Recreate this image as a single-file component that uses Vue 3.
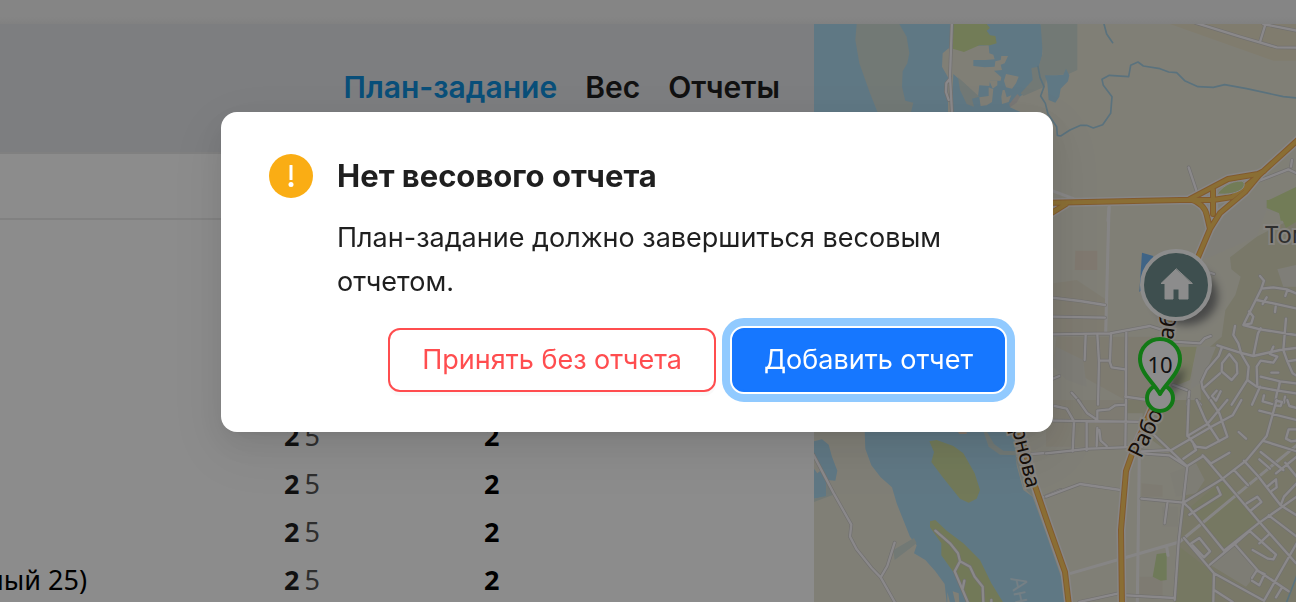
<script setup>
const rows = [
  { id: 1 },
  { id: 2 },
  { id: 3 },
  { id: 4 },
  { id: 5, count: 2, capacity: 5, total: 2 },
  { id: 6, count: 2, capacity: 5, total: 2 },
  { id: 7, count: 2, capacity: 5, total: 2 },
  { id: 8, name: 'ный 25)', count: 2, capacity: 5, total: 2 },
]

const tabs = [
  { label: 'План-задание', active: true },
  { label: 'Вес', active: false },
  { label: 'Отчеты', active: false },
]

// Map tiles are drawn at three units per pixel.
const tiles = [
  {
    id: 'north',
    at: 'translate(810 0) scale(.33333)',
    roads:
      'M426 60L420 230L426 340 M420 236L409 250L408 276L416 300 M1155 68L1290 110L1400 142L1460 143 M1360 72L1460 92 M1366 74L1350 126 M1136 502L1160 574 M1340 545L1435 508L1460 520 M1446 480L1443 500',
    faint: 'M726 572L790 596 M898 616L894 662 M1220 606L1220 640',
  },
  {
    id: 'east',
    at: 'translate(1040 200) scale(.33333)',
    roads:
      'M36 293L120 303L195 315 M36 350L195 353 M36 403L210 400L330 378L362 388 M137 404L134 480 M172 404L177 485L174 614 M177 482L208 482L215 502L256 508 M213 402L210 482 M259 396L257 614 M36 537L58 528 M95 578L120 606 M256 590L325 600 M402 425L480 430L494 415L512 408 M500 215L522 222 M400 555L440 570 M448 574L443 614 M660 228L672 242L664 266L610 375L660 388L768 405 M664 266L700 262L740 268L768 280 M650 300L700 310L768 325 M627 334L640 350L634 370L616 374 M668 312L680 292 M707 320L705 336 M742 270L736 288 M585 378L580 405L595 430L604 462 M532 436L600 458L640 468L720 450L768 444 M640 468L654 400L662 385 M545 444L536 468L500 510L484 545L488 566L520 614 M568 462L546 490L545 514L575 540L592 520L590 490L570 464 M604 462L626 500L622 540L575 614 M530 572L516 588L528 602L542 574 M488 566L540 520 M768 480L742 484L730 450 M742 484L758 520L768 526 M652 560L650 500L662 482L700 488L712 470 M662 530L720 544L768 550 M720 544L714 572L768 580 M694 518L715 518 M712 572L704 614 M622 540L650 560L712 572 M660 560L636 614 M672 586L668 604L696 612 M735 590L732 608 M470 600L482 614 M712 470L690 462 M690 462L700 440 M738 356L730 450',
    faint: 'M207 24L197 400',
  },
  {
    id: 'south-west',
    at: 'translate(810 400) scale(.33333)',
    roads:
      'M10 164L70 278L124 374L120 410L140 448L185 504L212 532L255 608 M212 532L232 498L254 428 M376 392L420 430L444 460L450 484L480 500L494 530L518 560L520 608 M450 484L434 514L474 608 M463 542L458 566 M544 600L544 608 M664 162L752 156 M700 292L752 270',
    faint: '',
  },
  {
    id: 'south-east',
    at: 'translate(1046 400) scale(.33333)',
    roads:
      'M20 62L320 66 M26 18L62 26L84 64L80 154 M122 66L122 150 M154 84L152 138 M160 90L164 122L182 138 M0 160L130 146L290 140 M96 0L124 40L154 60 M154 60L154 32L190 28L208 16L238 14 M240 0L238 140 M0 290L102 252L224 270 M100 606L218 580 M242 586L386 594 M286 154L376 150L500 78L560 46L586 0 M286 160L370 166L420 198 M296 78L424 200 M428 0L424 106L450 140L480 144L544 110L520 40L494 0 M452 0L478 60L520 124 M544 0L484 72L424 108 M412 176L450 150L440 126 M424 198L472 168L530 236L640 366L750 490 M424 198L398 424L386 600 M286 296L412 308 M364 310L356 370 M412 308L530 236L600 182L662 108L692 0 M412 308L430 324L534 452 M430 344L524 284L514 262 M534 452L640 368L752 290 M414 414L504 520L502 604 M436 430L460 414L492 454L474 472L440 436 M492 494L566 432L612 392 M504 520L654 602L752 430 M504 570L560 606 M566 432L636 512L728 574 M610 392L690 464L682 478L666 476L620 450 M640 430L668 404 M618 534L632 512L656 522L640 556L618 542 M668 346L752 410 M602 310L634 290L646 306L614 332 M564 210L606 256 M594 182L636 228L704 316L752 346 M640 178L672 206 M644 156L712 210 M650 122L752 154 M752 170L690 220 M666 258L690 238L692 262L678 272 M704 316L714 290L752 250 M718 188L752 230 M496 190L550 158 M470 166L492 188 M578 96L600 116 M640 32L752 60 M752 88L728 88L720 116L736 124L752 122 M690 2L708 6L704 18L688 16 M724 0L730 18L752 24 M690 592L708 562',
    faint: 'M280 160L274 608 M74 520L400 426L752 136 M362 440L366 466',
  },
]

const highways =
  'M1040 203L1180 200L1213 200L1232 197L1257 177L1300 138 M1190 199L1228 179L1258 174L1264 171 M1190 199Q1205 204 1207 216L1210 229L1196 262L1170 315L1160 390L1132 454L1126 471L1121 530L1122 606 M1210 229L1220 213L1245 192L1260 174 M1213 214V190 M1050 214L1066 204 M1017 422L1034 483L1048 524L1065 572L1069 606'
</script>

<template>
  <div class="page">
    <header class="topbar"></header>
    <main class="workspace">
      <section class="plan">
        <nav class="tabs">
          <a
            v-for="tab in tabs"
            :key="tab.label"
            href="#"
            class="tab"
            :class="{ active: tab.active }"
          >{{ tab.label }}</a>
        </nav>
        <div class="strip"></div>
        <table class="stops">
          <tbody>
            <tr v-for="row in rows" :key="row.id">
              <td class="name"><div class="name-text">{{ row.name }}</div></td>
              <td class="count">
                <div v-if="row.count" class="pair"><b>{{ row.count }}</b><span>{{ row.capacity }}</span></div>
              </td>
              <td class="total"><b>{{ row.total }}</b></td>
            </tr>
          </tbody>
        </table>
      </section>

      <section class="map">
        <svg class="canvas" viewBox="814 24 482 578" preserveAspectRatio="xMinYMin slice">
          <rect x="814" y="24" width="482" height="578" fill="#e9e7d8" />

          <g transform="translate(810 0) scale(.33333)">
            <path fill="#eae2c8" d="M1080 72L1460 72V182H1390Z" />
            <path fill="#aedaf0" d="M12 72H692L700 130L696 170L686 204L700 250L664 262L640 282L620 298L600 322L640 340H12Z" />
            <path fill="#cfdcd6" d="M140 72H268L290 110L298 160L292 190L278 214L276 260L286 302L310 308L302 340H204L180 280L148 190L136 120Z" />
            <path fill="#cfdcd6" d="M692 72H802V210L776 222L710 228L704 260L640 288L632 280L668 240L664 204L686 200L698 160Z" />
            <path fill="#aedaf0" d="M704 226H736L760 224L768 206L778 226L774 244L752 266L748 290L736 308L716 300L712 250Z" />
            <path fill="#e9e7d8" d="M430 140L536 136L538 160L550 164L554 178L526 180L490 180V198L524 202L554 200L556 184L572 180L574 168L594 168L584 190L572 194L576 210L552 212L574 232L572 242L540 242L538 258L508 256L504 290L450 240L430 222L424 340H414V232L396 200L398 160L414 146Z" />
            <path fill="#cfdcd6" d="M444 232L508 290L486 296L492 320L470 312L450 270Z" />
            <path fill="#e9e7d8" d="M588 222L626 230L618 250L606 266L588 262L582 242Z M536 262L550 268L546 306L530 316L512 318L508 292L536 288Z M574 290L578 270L584 270L590 292L604 286L596 306L576 312Z M538 242L562 242L562 256L548 266Z" />
            <path fill="#cfe29f" d="M430 72H530L540 84L530 92L540 106L556 108L560 130L540 136H508L462 156L428 146Z" />
            <path fill="#dcd9d5" d="M600 322L620 308L630 290L622 282L598 312Z" />
            <path class="stream" d="M882 72L890 102L908 128 M684 200L690 232L702 260L692 288L706 310L714 342L740 380L742 406L752 408L780 390L812 376L830 376L850 384L878 374L902 340L906 290L880 256L876 238L898 226L956 230L962 196L984 186L1000 198L1050 206L1076 216L1100 218L1124 242L1164 260L1210 262L1244 254L1310 266L1420 290L1460 294" />
            <path fill="#cfe29f" d="M1368 604L1460 560V662H1412L1406 630L1372 620Z" />
          </g>

          <g transform="translate(1040 200) scale(.33333)">
            <path fill="#dcdbc0" d="M768 50L650 110L570 172L574 208L602 230L586 285L556 330L545 410L510 440L480 540L484 614H768Z" />
            <path fill="#e8e6da" d="M490 180L650 110L680 30L768 50V0H590L500 100Z M712 208L768 195V260H730Z M470 440L528 440L500 510L480 550L450 570Z" />
            <path fill="#cfe29f" d="M680 0H768V66L738 84L718 40L680 24Z" />
            <path fill="#dce0b3" d="M400 440H470L450 540L400 560Z" />
            <path fill="#e9ddcb" d="M106 152H172V210H104Z" />
            <path fill="#e6e0cd" d="M40 250L110 240L200 300V400H40Z M50 410H350V614H280L40 480Z" />
            <path fill="#e5e3d8" d="M48 440L130 480L140 560L80 540L40 500Z" />
            <path fill="#73b6f4" d="M306 158L340 168L330 250L298 276Z" />
          </g>

          <g transform="translate(1046 400) scale(.33333)">
            <path fill="#dcdbbd" d="M220 0H752V608H386L398 424L424 198L290 100V40H220Z" />
            <path fill="#e6e4d6" d="M372 220L450 190L476 240L450 280L390 290Z M492 494L566 432L640 512L600 560Z M348 320H396V380H350Z" />
            <path fill="#e6e1cf" d="M0 0H240V140H0Z M286 250L350 256V290H286Z M280 530H350V590H280Z" />
            <path fill="#d7dab2" d="M430 324L534 236L636 366L534 452Z M400 440L504 520V608H386Z" />
            <path fill="#cbdfa3" d="M332 462L362 458V540L344 542L320 530Z" />
            <path class="stream" d="M722 606L752 528" />
          </g>

          <g transform="translate(810 400) scale(.33333)">
            <path fill="#aedaf0" d="M164 94L166 146L184 196L212 232L246 262L260 310L276 350L300 410L320 436L312 460L346 480L376 514L404 552L410 608H780L708 400L668 290L640 270L620 196L612 94Z" />
            <path fill="#aedaf0" d="M12 124L36 118L56 134L66 170L82 212L76 242L52 240L48 290L12 296Z" />
            <path fill="#e9e7d8" d="M12 172L34 210L22 220L12 206Z M412 576L420 608H412Z M428 574L446 580L448 608H436Z" />
            <path fill="#cfdcd6" d="M250 450L312 414L320 430L254 480Z M520 94L536 140L570 164L622 166L620 154L580 152L552 132L530 94Z M48 242L70 284L12 306V296L48 288Z M616 172L660 160L668 290L640 260Z" />
            <path fill="#cfdda1" d="M358 124L380 120L430 138L460 160L494 220L510 270L500 296L476 308L450 296L400 234L364 186L372 156Z M360 364L376 360L410 392L460 430L510 480L544 550L580 608H468L440 530L394 466V430L360 382Z" />
            <path fill="#ead8c5" d="M442 94H470V102H448Z" />
          </g>

          <g v-for="tile in tiles" :key="tile.id" :transform="tile.at">
            <path class="faint" :d="tile.faint" />
            <path class="casing" :d="tile.roads" />
            <path class="road" :d="tile.roads" />
          </g>

          <path class="highway-halo" :d="highways" />
          <path class="highway-edge" :d="highways" />
          <path class="highway" :d="highways" />
          <path fill="#cfe29f" stroke="#f5f2f2" d="M1217 194C1222 187 1230 181 1242 181Q1246 183 1243 188C1238 193 1228 195 1217 194Z" />

          <g class="labels">
            <text x="1265" y="243" class="town">Томск</text>
            <text transform="translate(1141 459) rotate(-64)">Рабо</text>
            <text transform="translate(1173 340) rotate(-82)">аб</text>
            <text transform="translate(1012 429) rotate(76)" class="street">рнова</text>
            <text transform="translate(1010 578) rotate(78)" class="river">Ан</text>
          </g>

          <ellipse class="blur" cx="1186" cy="296" rx="32" ry="29" />
          <circle cx="1176" cy="285" r="34" fill="#719190" stroke="#fff" stroke-width="4" />
          <path fill="#fff" stroke="#fff" stroke-linejoin="round" d="M1176 269L1161 283.500H1165V299H1173V289H1179V299H1188V283.500H1192Z" />

          <path class="blur" d="M1163 392L1176 372L1186 368L1180 386L1168 397Z" />
          <circle cx="1160" cy="398" r="13" fill="#fff" stroke="#21dd28" stroke-width="4" />
          <path d="M1160 394C1154 383 1140 373 1140 359A20 20 0 0 1 1180 359C1180 373 1166 383 1160 394Z" fill="#fff" stroke="#21dd28" stroke-width="4" stroke-linejoin="round" />
          <text x="1160" y="373" class="pin-number">10</text>
        </svg>
      </section>
    </main>

    <div class="mask">
      <div class="modal" role="dialog" aria-modal="true" aria-labelledby="dialog-title">
        <svg class="warning" viewBox="0 0 44 44" aria-hidden="true">
          <circle cx="22" cy="22" r="22" fill="#faad14" />
          <rect x="20.500" y="11" width="3" height="15" rx=".5" fill="#fff" />
          <circle cx="22" cy="30.500" r="2.500" fill="#fff" />
        </svg>
        <div class="message">
          <h2 id="dialog-title">Нет весового отчета</h2>
          <p>План-задание должно завершиться весовым отчетом.</p>
        </div>
        <div class="actions">
          <button type="button" class="btn danger">Принять без отчета</button>
          <button type="button" class="btn primary">Добавить отчет</button>
        </div>
      </div>
    </div>
  </div>
</template>

<style>
body {
  margin: 0;
}
</style>

<style scoped>
.page {
  height: 100vh;
  display: flex;
  flex-direction: column;
  overflow: hidden;
  background: #fff;
  font-family: Inter, "Noto Sans", sans-serif;
}
.topbar {
  flex: 0 0 24px;
  background: linear-gradient(#f2f2f2 70%, #ebebeb);
}
.workspace {
  flex: 1;
  min-height: 0;
  display: grid;
  grid-template-columns: 814fr 482fr;
}
.plan {
  min-width: 0;
  overflow: hidden;
}
.tabs {
  height: 130px;
  box-sizing: border-box;
  padding: 0 34px 2px;
  display: flex;
  justify-content: flex-end;
  align-items: center;
  gap: 28px;
  background: #e3e5e9;
  border-bottom: 2px solid #eaeaea;
}
.tab {
  color: #1f1f1f;
  font-size: 30px;
  font-weight: 600;
  line-height: 44px;
  text-decoration: none;
}
.tab.active {
  color: #0f8fdc;
}
.strip {
  height: 66px;
  box-sizing: border-box;
  border-bottom: 2px solid #ececec;
}
.stops {
  width: 100%;
  table-layout: fixed;
  border-collapse: collapse;
  font-family: "Noto Sans", sans-serif;
  font-size: 27px;
  line-height: 48px;
  color: #000;
}
.stops td {
  height: 48px;
  padding: 0;
}
.stops .name {
  width: 284px;
}
.stops .count {
  width: 200px;
}
.name-text {
  width: 87px;
  display: flex;
  justify-content: flex-end;
  overflow: hidden;
  white-space: nowrap;
}
.pair {
  display: flex;
  gap: 5px;
  color: #1f1f1f;
}
.pair span {
  color: #555;
}
.map {
  min-width: 0;
  overflow: hidden;
}
.canvas {
  display: block;
  width: 100%;
  height: 100%;
}
.canvas path {
  stroke-linecap: round;
  stroke-linejoin: round;
}
.stream {
  fill: none;
  stroke: #a4cfe4;
  stroke-width: 5;
}
.faint {
  fill: none;
  stroke: #f5f3f3;
  stroke-width: 9;
}
.casing {
  fill: none;
  stroke: #ceccc9;
  stroke-width: 11;
}
.road {
  fill: none;
  stroke: #fbf8fb;
  stroke-width: 7;
}
.highway-halo {
  fill: none;
  stroke: #f5f2f2;
  stroke-width: 9;
}
.highway-edge {
  fill: none;
  stroke: #eda553;
  stroke-width: 6;
}
.highway {
  fill: none;
  stroke: #fcc95f;
  stroke-width: 4;
}
.labels {
  font-family: "Noto Sans", sans-serif;
  font-size: 22px;
  fill: #2a1a10;
  stroke: #f5f0e8;
  stroke-width: 4px;
  paint-order: stroke;
}
.labels .town {
  font-size: 24px;
  fill: #555;
}
.labels .street {
  font-size: 21px;
}
.labels .river {
  fill: #d5e9f3;
  stroke: none;
}
.blur {
  fill: #1f2330;
  opacity: .5;
  filter: blur(4px);
}
.pin-number {
  font-family: "Noto Sans", sans-serif;
  font-size: 22px;
  text-anchor: middle;
  fill: #222;
}
.mask {
  position: fixed;
  inset: 0;
  padding: 112px 22px 0 0;
  display: flex;
  justify-content: center;
  align-items: flex-start;
  background: rgba(0, 0, 0, .45);
}
.modal {
  width: 832px;
  box-sizing: border-box;
  padding: 40px 48px;
  display: grid;
  grid-template-columns: 44px 1fr;
  column-gap: 24px;
  row-gap: 24px;
  background: #fff;
  border-radius: 16px;
  box-shadow:
    0 12px 32px rgba(0, 0, 0, .08),
    0 6px 12px -8px rgba(0, 0, 0, .12),
    0 18px 56px 16px rgba(0, 0, 0, .05);
  color: rgba(0, 0, 0, .88);
}
.warning {
  width: 44px;
  height: 44px;
  margin-top: 2px;
}
h2 {
  margin: 0 0 16px;
  font-size: 31px;
  font-weight: 700;
  line-height: 48px;
}
p {
  margin: 0;
  font-size: 27px;
  line-height: 44px;
}
.actions {
  grid-column: 1 / -1;
  display: flex;
  justify-content: flex-end;
  gap: 16px;
}
.btn {
  height: 64px;
  box-sizing: border-box;
  padding: 0 32px;
  border: 2px solid;
  border-radius: 12px;
  font-family: inherit;
  font-size: 27px;
  line-height: 44px;
  white-space: nowrap;
}
.danger {
  color: #ff4d4f;
  background: #fff;
  border-color: #ff4d4f;
  box-shadow: 0 4px 0 rgba(0, 0, 0, .02);
}
.primary {
  padding: 0 30px;
  color: #fff;
  background: #1677ff;
  border-color: #1677ff;
  outline: 8px solid #91caff;
  outline-offset: 2px;
}
</style>
